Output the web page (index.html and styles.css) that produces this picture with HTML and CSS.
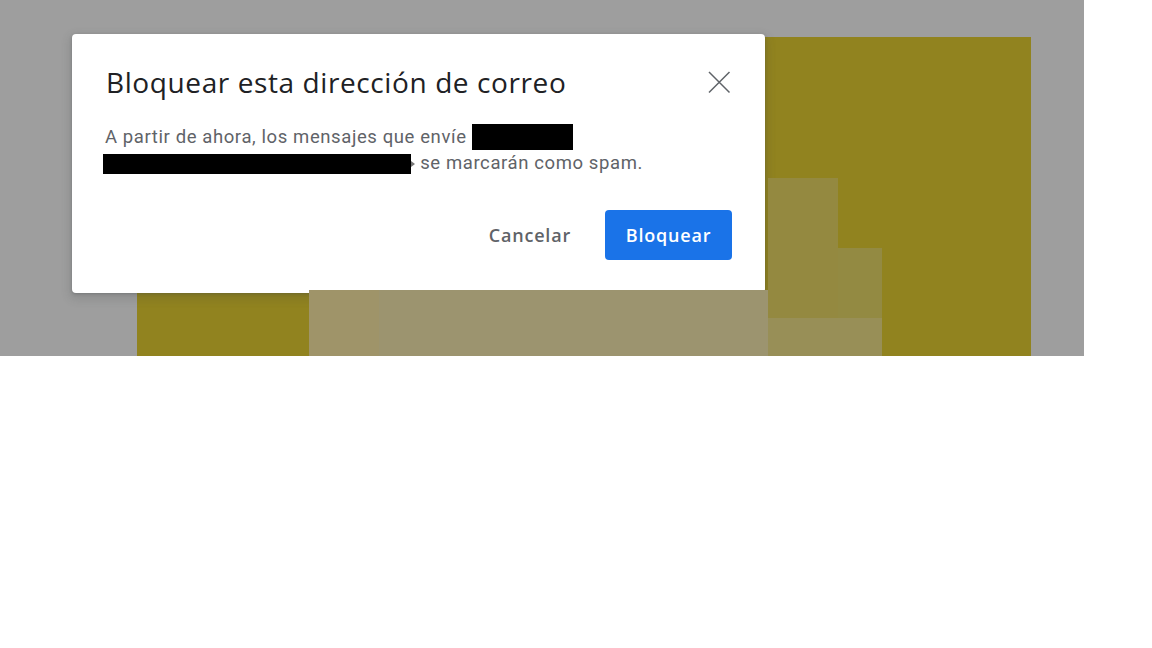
FILE: index.html
```html
<!DOCTYPE html>
<html lang="es">
<head>
    <meta charset="utf-8">
    <title>Bloquear esta dirección de correo</title>
    <link rel="stylesheet" href="styles.css">
</head>
<body>
    <div class="scrim">
        <div class="backdrop-art"></div>

        <div class="dialog" role="dialog">
            <div class="dialog-header">
                <h2 class="dialog-title">Bloquear esta dirección de correo</h2>
                <button class="close-btn" aria-label="Cerrar">
                    <svg width="24" height="24" viewBox="0 0 24 24">
                        <path d="M2 2 L22.5 22.5 M22.5 2 L2 22.5" stroke="#5f6368" stroke-width="1.5" fill="none"/>
                    </svg>
                </button>
            </div>
            <p class="dialog-body">
                A partir de ahora, los mensajes que envíe <span class="redact redact-name"></span>
                <span class="redact redact-mail"></span><span class="redact-tail"></span> se marcarán como spam.
            </p>
            <div class="dialog-actions">
                <button class="btn btn-text">Cancelar</button>
                <button class="btn btn-primary">Bloquear</button>
            </div>
        </div>

        <!-- pixelated leftovers of the screenshot edit, lying over the dialog -->
        <div class="pix pix-a"></div>
        <div class="pix pix-b"></div>
        <div class="pix pix-c"></div>
        <div class="pix pix-d"></div>
        <div class="pix pix-e"></div>
    </div>
</body>
</html>
```

FILE: styles.css
```css
body {
    margin: 0;
    background: #ffffff;
    font-family: Roboto, "Liberation Sans", Arial, sans-serif;
}

.scrim {
    position: relative;
    width: 1084px;
    height: 356px;
    background: #9e9e9e;
    padding: 37px 0 0 137px;
    box-sizing: border-box;
}

.backdrop-art {
    width: 894px;
    height: 319px;
    background: #91831f;
}

.dialog {
    position: absolute;
    left: 72px;
    top: 34px;
    width: 693px;
    height: 259px;
    box-sizing: border-box;
    padding: 30px 33px 0 32px;
    background: #ffffff;
    border-radius: 4px;
    box-shadow: 0 1px 3px rgba(60, 64, 67, 0.3), 0 4px 8px 3px rgba(60, 64, 67, 0.15);
}

.dialog-header {
    display: flex;
    justify-content: space-between;
    align-items: flex-start;
}

.dialog-title {
    margin: 0 0 0 2px;
    font-family: "Open Sans", sans-serif;
    font-weight: 400;
    font-size: 28px;
    line-height: 36px;
    color: #202124;
    letter-spacing: 0.6px;
}

.close-btn {
    margin: 6px 1px 0 0;
    padding: 0;
    width: 24px;
    height: 24px;
    border: none;
    background: none;
    cursor: pointer;
}

.close-btn svg {
    display: block;
}

.dialog-body {
    margin: 24px 0 0 0;
    text-indent: 1px;
    font-size: 18.5px;
    line-height: 26px;
    color: #5f6368;
    letter-spacing: 0.6px;
}

.redact {
    display: inline-block;
    background: #000000;
}

.redact-name {
    width: 101px;
    height: 26px;
    vertical-align: -7px;
}

.redact-mail {
    width: 308px;
    height: 20px;
    margin-left: -1px;
    vertical-align: -5px;
}

.redact-tail {
    display: inline-block;
    width: 0;
    height: 0;
    border-top: 3px solid transparent;
    border-bottom: 3px solid transparent;
    border-left: 4px solid #777777;
    vertical-align: 2px;
}

.dialog-actions {
    display: flex;
    justify-content: flex-end;
    align-items: center;
    gap: 12px;
    margin-top: 34px;
}

.btn {
    height: 50px;
    padding: 0 22px;
    border: none;
    border-radius: 4px;
    font-family: "Open Sans", sans-serif;
    font-weight: 600;
    font-size: 18px;
    letter-spacing: 0.8px;
    cursor: pointer;
}

.btn-text {
    background: none;
    color: #5f6368;
}

.btn-primary {
    width: 127px;
    padding: 0;
    background: #1a73e8;
    color: #ffffff;
}

.pix {
    position: absolute;
}

.pix-a {
    left: 309px;
    top: 290px;
    width: 70px;
    height: 67px;
    background: #9f9469;
}

.pix-b {
    left: 379px;
    top: 290px;
    width: 389px;
    height: 67px;
    background: #9c946f;
}

.pix-c {
    left: 768px;
    top: 178px;
    width: 70px;
    height: 140px;
    background: #948940;
}

.pix-d {
    left: 838px;
    top: 248px;
    width: 44px;
    height: 70px;
    background: #938a42;
}

.pix-e {
    left: 768px;
    top: 318px;
    width: 114px;
    height: 39px;
    background: #988f57;
}
```
